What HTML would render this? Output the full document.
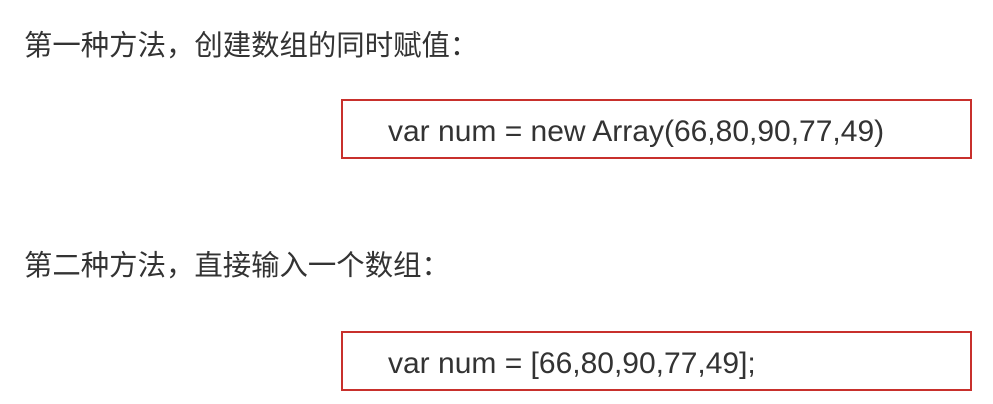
<!DOCTYPE html>
<html><head><meta charset="utf-8"><style>
body{margin:0;width:993px;height:404px;background:#fff;position:relative;overflow:hidden;color:#333;font-family:"Liberation Sans","Noto Sans CJK SC",sans-serif}
.h{position:absolute;left:24px;font-size:28.4px;line-height:32px;white-space:nowrap}
.b{position:absolute;left:341px;width:627px;height:56px;border:2px solid #c8302c}
.c{position:absolute;left:45px;top:14px;font-size:30px;line-height:34px;white-space:nowrap}
</style></head><body>
<div class="h" style="top:30px">第一种方法，创建数组的同时赋值：</div>
<div class="b" style="top:99px"><div class="c">var num = new Array(66,80,90,77,49)</div></div>
<div class="h" style="top:250px">第二种方法，直接输入一个数组：</div>
<div class="b" style="top:331px"><div class="c">var num = [66,80,90,77,49];</div></div>
</body></html>
